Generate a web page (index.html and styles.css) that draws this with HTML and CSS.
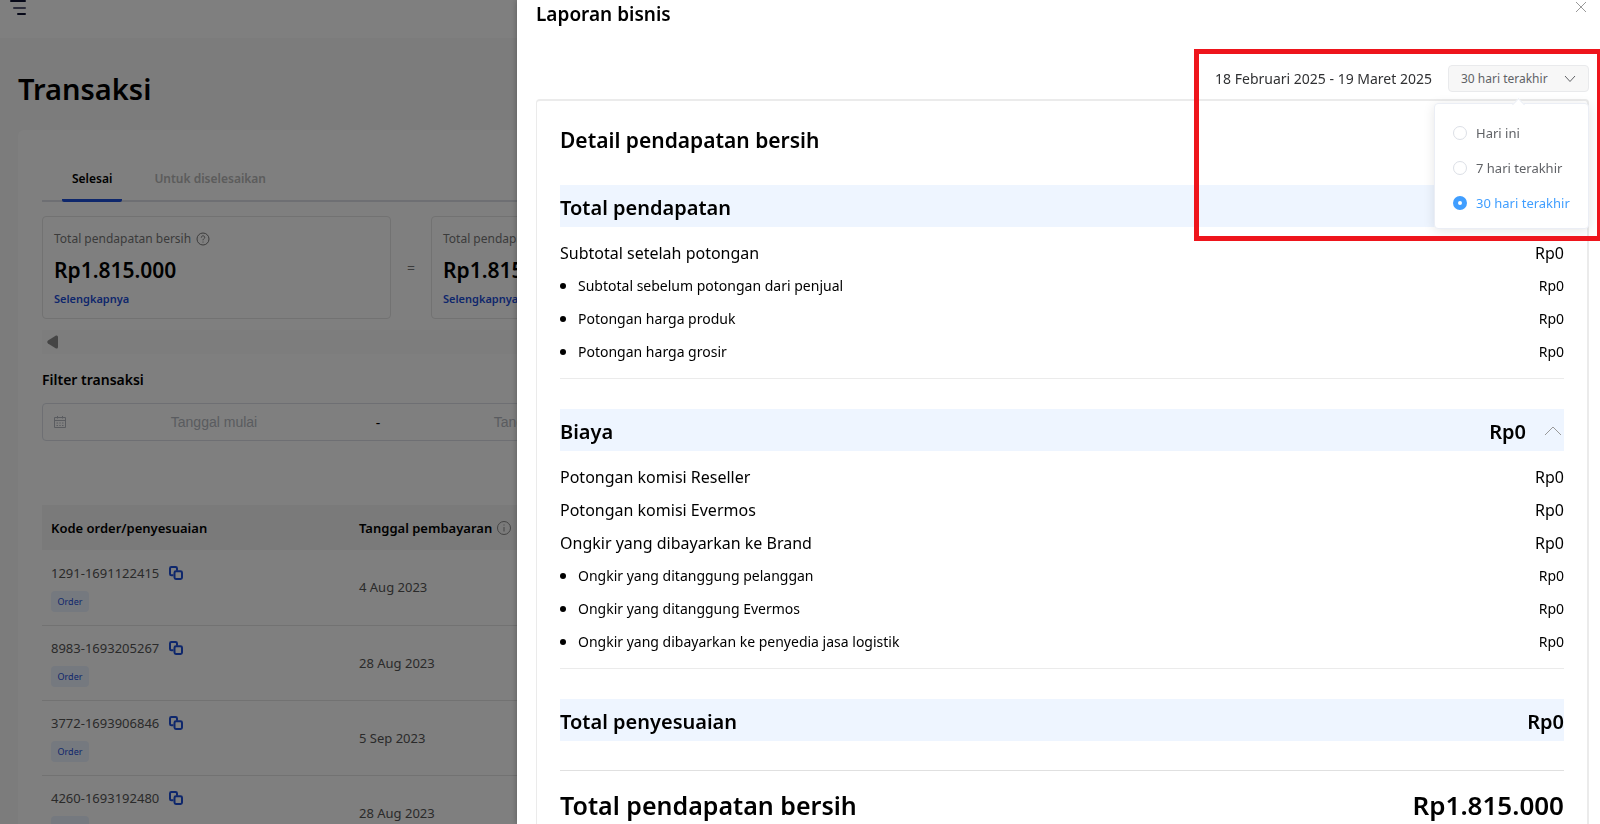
FILE: index.html
```html
<!DOCTYPE html>
<html lang="id">
<head>
  <meta charset="UTF-8" />
  <meta name="viewport" content="width=device-width, initial-scale=1.0" />
  <title>Transaksi</title>
  <link rel="stylesheet" href="styles.css">
</head>
<body>
  <svg class="sprite" aria-hidden="true">
    <symbol id="copy" viewBox="0 0 14 14">
      <path d="M4.500 9.300H2.400A1.400 1.400 0 0 1 1 7.900V2.400A1.400 1.400 0 0 1 2.400 1H6.600A1.400 1.400 0 0 1 8 2.400V4.800" />
      <rect x="5.500" y="5.300" width="7.500" height="7.700" rx="1.400" />
    </symbol>
  </svg>

  <header class="topbar">
    <button class="menu-btn" aria-label="Menu">
      <svg width="16" height="16" viewBox="0 0 16 16">
        <path d="M1 1H15M8 14H15" stroke="#0c1030" />
        <path d="M4 8H15" stroke="#5a5c78" />
      </svg>
    </button>
  </header>

  <main class="page">
    <h1>Transaksi</h1>
    <section class="panel">
      <nav class="tabs">
        <button class="tab active">Selesai</button>
        <button class="tab">Untuk diselesaikan</button>
      </nav>

      <div class="stats">
        <div class="stat">
          <div class="stat-label">Total pendapatan bersih
            <svg width="14" height="14" viewBox="0 0 14 14">
              <circle cx="7" cy="7" r="6" />
              <path d="M5.300 5.600C5.300 3.200 8.800 3.300 8.700 5.500C8.600 6.800 7 6.800 7 8.300M7 9.600V10.500" />
            </svg>
          </div>
          <div class="stat-value">Rp1.815.000</div>
          <a href="#">Selengkapnya</a>
        </div>
        <div class="equals">=</div>
        <div class="stat">
          <div class="stat-label">Total pendapatan</div>
          <div class="stat-value">Rp1.815.000</div>
          <a href="#">Selengkapnya</a>
        </div>
      </div>

      <div class="scroller">
        <svg width="12" height="14" viewBox="0 0 12 14"><path d="M9 0.500Q11 0 11 2V12Q11 14 9 13.500L1 8.500Q-0.500 7 1 5.500Z" /></svg>
      </div>

      <h2>Filter transaksi</h2>
      <div class="date-range">
        <svg width="14" height="14" viewBox="0 0 14 14">
          <path d="M1.500 2.500H12.500V12.500H1.500ZM1.500 5.500H12.500M4.500 1V3.500M9.500 1V3.500M3.500 8H5M6.300 8H7.700M9 8H10.500M3.500 10.500H5M6.300 10.500H7.700M9 10.500H10.500" />
        </svg>
        <input type="text" placeholder="Tanggal mulai" aria-label="Tanggal mulai" />
        <span>-</span>
        <input type="text" placeholder="Tanggal selesai" aria-label="Tanggal selesai" />
      </div>

      <table>
        <thead>
          <tr>
            <th class="code-col">Kode order/penyesuaian</th>
            <th>
              <div class="th-info">Tanggal pembayaran
                <svg width="16" height="16" viewBox="0 0 16 16"><circle cx="8" cy="8" r="6.500" /><path d="M8 7V11.500M8 4.500V5.500" /></svg>
              </div>
            </th>
          </tr>
        </thead>
        <tbody>
          <tr>
            <td>
              <div class="code">1291-1691122415 <button aria-label="Salin"><svg width="14" height="14"><use href="#copy" /></svg></button></div>
              <span class="tag">Order</span>
            </td>
            <td>4 Aug 2023</td>
          </tr>
          <tr>
            <td>
              <div class="code">8983-1693205267 <button aria-label="Salin"><svg width="14" height="14"><use href="#copy" /></svg></button></div>
              <span class="tag">Order</span>
            </td>
            <td>28 Aug 2023</td>
          </tr>
          <tr>
            <td>
              <div class="code">3772-1693906846 <button aria-label="Salin"><svg width="14" height="14"><use href="#copy" /></svg></button></div>
              <span class="tag">Order</span>
            </td>
            <td>5 Sep 2023</td>
          </tr>
          <tr>
            <td>
              <div class="code">4260-1693192480 <button aria-label="Salin"><svg width="14" height="14"><use href="#copy" /></svg></button></div>
              <span class="tag"></span>
            </td>
            <td>28 Aug 2023</td>
          </tr>
        </tbody>
      </table>
    </section>
  </main>

  <div class="overlay"></div>

  <aside class="drawer">
    <div class="drawer-head">
      <h2>Laporan bisnis</h2>
      <button class="close" aria-label="Tutup">
        <svg width="12" height="12" viewBox="0 0 12 12"><path d="M1 1L11 11M11 1L1 11" /></svg>
      </button>
    </div>

    <div class="period">
      <span>18 Februari 2025 - 19 Maret 2025</span>
      <div class="dropdown">
        <button class="dropdown-btn">30 hari terakhir
          <svg width="12" height="8" viewBox="0 0 12 8"><path d="M1 1L6 6.500L11 1" /></svg>
        </button>
        <div class="dropdown-menu">
          <label><input type="radio" name="period" /> Hari ini</label>
          <label><input type="radio" name="period" /> 7 hari terakhir</label>
          <label><input type="radio" name="period" checked /> 30 hari terakhir</label>
        </div>
      </div>
    </div>

    <section class="report">
      <h3>Detail pendapatan bersih</h3>

      <div class="band">Total pendapatan</div>
      <ul>
        <li><span>Subtotal setelah potongan</span><span>Rp0</span></li>
        <li class="sub"><span>Subtotal sebelum potongan dari penjual</span><span>Rp0</span></li>
        <li class="sub"><span>Potongan harga produk</span><span>Rp0</span></li>
        <li class="sub"><span>Potongan harga grosir</span><span>Rp0</span></li>
      </ul>

      <div class="band">Biaya
        <span class="band-value">Rp0
          <button aria-label="Tutup rincian biaya">
            <svg width="18" height="12" viewBox="0 0 18 12"><path d="M1 10L9 2L17 10" /></svg>
          </button>
        </span>
      </div>
      <ul>
        <li><span>Potongan komisi Reseller</span><span>Rp0</span></li>
        <li><span>Potongan komisi Evermos</span><span>Rp0</span></li>
        <li><span>Ongkir yang dibayarkan ke Brand</span><span>Rp0</span></li>
        <li class="sub"><span>Ongkir yang ditanggung pelanggan</span><span>Rp0</span></li>
        <li class="sub"><span>Ongkir yang ditanggung Evermos</span><span>Rp0</span></li>
        <li class="sub"><span>Ongkir yang dibayarkan ke penyedia jasa logistik</span><span>Rp0</span></li>
      </ul>

      <div class="band">Total penyesuaian <span>Rp0</span></div>

      <div class="grand-total"><span>Total pendapatan bersih</span><span class="amount">Rp1.815.000</span></div>
    </section>

    <div class="highlight"></div>
  </aside>
</body>
</html>
```

FILE: styles.css
```css
* {
  box-sizing: border-box;
}
body {
  margin: 0;
  height: 100vh;
  overflow: hidden;
  background: #f8f8f8;
  color: #000;
  font-family: "Noto Sans", sans-serif;
  font-size: 14px;
}
h1, h2, h3, ul {
  margin: 0;
  padding: 0;
}
button {
  padding: 0;
  border: none;
  background: none;
  color: inherit;
  font: inherit;
  cursor: pointer;
}
svg {
  display: block;
  fill: none;
  stroke: currentColor;
}
.sprite {
  position: absolute;
  width: 0;
  height: 0;
}

/* page behind the drawer */
.topbar {
  height: 38px;
  padding-left: 10px;
  background: #fff;
}
.menu-btn svg {
  stroke-width: 2;
  stroke-linecap: round;
}
.page {
  padding: 31px 18px 0;
}
h1 {
  margin-bottom: 21px;
  font-size: 29px;
  font-weight: 600;
  line-height: 40px;
}
.panel {
  padding: 32px 24px;
  border-radius: 6px;
  background: #fff;
}
.tabs {
  display: flex;
  gap: 22px;
  margin-bottom: 14px;
  padding-left: 20px;
  border-bottom: 2px solid #dcdfe6;
}
.tab {
  height: 40px;
  margin-bottom: -2px;
  padding: 0 10px 4px;
  border-bottom: 3px solid transparent;
  color: #b8b8b8;
  font-size: 12px;
  font-weight: 600;
}
.tab.active {
  border-color: #1d4ed8;
  border-radius: 2px;
  color: #000;
}
.stats {
  display: flex;
}
.stat {
  flex: none;
  width: 349px;
  padding: 11px 11px 10px;
  border: 1px solid #e4e4e4;
  border-radius: 4px;
}
.stat-label {
  display: flex;
  align-items: center;
  gap: 5px;
  color: #777;
  font-size: 12px;
  line-height: 22px;
}
.stat-value {
  font-size: 21px;
  font-weight: 600;
  line-height: 40px;
}
.stat a {
  display: block;
  color: #1d4ed8;
  font-size: 11px;
  font-weight: 600;
  line-height: 18px;
  text-decoration: none;
}
.equals {
  display: flex;
  flex: none;
  align-items: center;
  justify-content: center;
  width: 40px;
  color: #777;
}
.scroller {
  display: flex;
  align-items: center;
  height: 24px;
  margin: 11px 0 12px;
  padding-left: 5px;
  background: #fafafa;
}
.scroller svg {
  fill: #8b8b8b;
  stroke: none;
}
.panel h2 {
  margin-bottom: 9px;
  font-size: 14px;
  font-weight: 600;
  line-height: 28px;
}
.date-range {
  display: flex;
  align-items: center;
  width: 658px;
  height: 38px;
  margin-bottom: 64px;
  padding: 0 10px;
  border: 1px solid #dcdfe6;
  border-radius: 4px;
}
.date-range svg {
  flex: none;
  color: #b4b8c0;
}
.date-range span {
  width: 34px;
  text-align: center;
}
.date-range input {
  flex: 1;
  min-width: 0;
  border: none;
  background: none;
  font-family: "Liberation Sans", sans-serif;
  font-size: 14px;
  text-align: center;
}
.date-range input::placeholder {
  color: #b4b8c0;
}
table {
  width: 100%;
  border-collapse: collapse;
}
th {
  height: 45px;
  padding: 0 9px;
  background: #f5f5f5;
  font-size: 13px;
  font-weight: 600;
  text-align: left;
}
.code-col {
  width: 308px;
}
.th-info {
  display: flex;
  align-items: center;
  gap: 4px;
}
.th-info svg {
  color: #888;
}
td {
  height: 75px;
  padding: 0 9px;
  border-bottom: 1px solid #e4e4e4;
  color: #555;
  font-size: 13px;
}
.code {
  display: flex;
  align-items: center;
  gap: 10px;
  margin-bottom: 8px;
  line-height: 20px;
}
.code svg {
  color: #1d4ed8;
  stroke-width: 2;
}
.tag {
  display: block;
  width: 38px;
  height: 21px;
  border-radius: 4px;
  background: #ebf3ff;
  color: #1d4ed8;
  font-size: 9px;
  line-height: 21px;
  text-align: center;
}
.overlay {
  position: fixed;
  inset: 0;
  background: rgba(0, 0, 0, 0.5);
}

/* drawer */
.drawer {
  position: fixed;
  inset: 0 0 0 517px;
  padding: 0 11px 0 19px;
  overflow: hidden;
  background: #fff;
  box-shadow: 0 0 6px rgba(0, 0, 0, 0.3);
}
.drawer-head {
  display: flex;
  justify-content: space-between;
  margin-bottom: 37px;
}
.drawer-head h2 {
  font-size: 19px;
  font-weight: 600;
  line-height: 28px;
}
.close {
  align-self: flex-start;
  padding: 1px 2px;
  color: #999;
}
.period {
  display: flex;
  align-items: center;
  justify-content: flex-end;
  gap: 16px;
  margin-bottom: 7px;
  color: #303133;
}
.dropdown {
  position: relative;
}
.dropdown-btn {
  display: flex;
  align-items: center;
  justify-content: space-between;
  width: 141px;
  height: 27px;
  padding: 0 12px;
  border: 1px solid #e9eaec;
  border-radius: 4px;
  background: #f7f7f7;
  color: #606266;
  font-size: 12px;
}
.dropdown-menu {
  position: absolute;
  top: 38px;
  right: 0;
  width: 155px;
  padding: 11px 18px 8px;
  border: 1px solid #ebeef5;
  border-radius: 4px;
  background: #fff;
  box-shadow: 0 2px 12px rgba(0, 0, 0, 0.1);
}
.dropdown-menu::before {
  content: "";
  position: absolute;
  top: -4px;
  left: 79px;
  width: 8px;
  height: 8px;
  border: solid #ebeef5;
  border-width: 1px 0 0 1px;
  background: #fff;
  transform: rotate(45deg);
}
.dropdown-menu label {
  display: flex;
  align-items: center;
  gap: 9px;
  height: 35px;
  color: #606266;
  font-size: 13px;
  white-space: nowrap;
}
.dropdown-menu input {
  flex: none;
  width: 14px;
  height: 14px;
  margin: 0;
  border: 1px solid #dcdfe6;
  border-radius: 50%;
  appearance: none;
}
.dropdown-menu input:checked {
  border: 5px solid #409eff;
}
.dropdown-menu label:has(:checked) {
  color: #409eff;
}
.report {
  padding: 19px 23px;
  border: 1px solid #ebebeb;
  border-top-width: 2px;
  border-right-width: 2px;
  border-radius: 4px;
}
.report h3 {
  margin-bottom: 25px;
  font-size: 21px;
  font-weight: 600;
  line-height: 40px;
}
.band {
  display: flex;
  align-items: center;
  justify-content: space-between;
  height: 42px;
  padding-top: 2px;
  background: #eef5ff;
  font-size: 20px;
  font-weight: 600;
}
.band-value {
  display: flex;
  align-items: center;
  gap: 18px;
}
.band button {
  padding-right: 2px;
  color: #999;
}
.report ul {
  margin-bottom: 30px;
  padding: 9px 0 10px;
  border-bottom: 1px solid #ebebeb;
  list-style: none;
}
.report li {
  display: flex;
  align-items: center;
  height: 33px;
  font-size: 16px;
}
.report li span:last-child {
  margin-left: auto;
}
.report .sub {
  font-size: 14px;
}
.sub::before {
  content: "";
  width: 6px;
  height: 6px;
  margin-right: 12px;
  border-radius: 50%;
  background: #000;
}
.grand-total {
  display: flex;
  justify-content: space-between;
  margin-top: 29px;
  padding-top: 14px;
  border-top: 1px solid #e0e0e0;
  font-size: 25px;
  font-weight: 600;
  line-height: 40px;
}
.amount {
  font-size: 26px;
}

/* red frame round the period picker, runs off the right edge */
.highlight {
  position: absolute;
  top: 49px;
  right: -2px;
  width: 408px;
  height: 192px;
  border: 5px solid #ee151c;
}
```
